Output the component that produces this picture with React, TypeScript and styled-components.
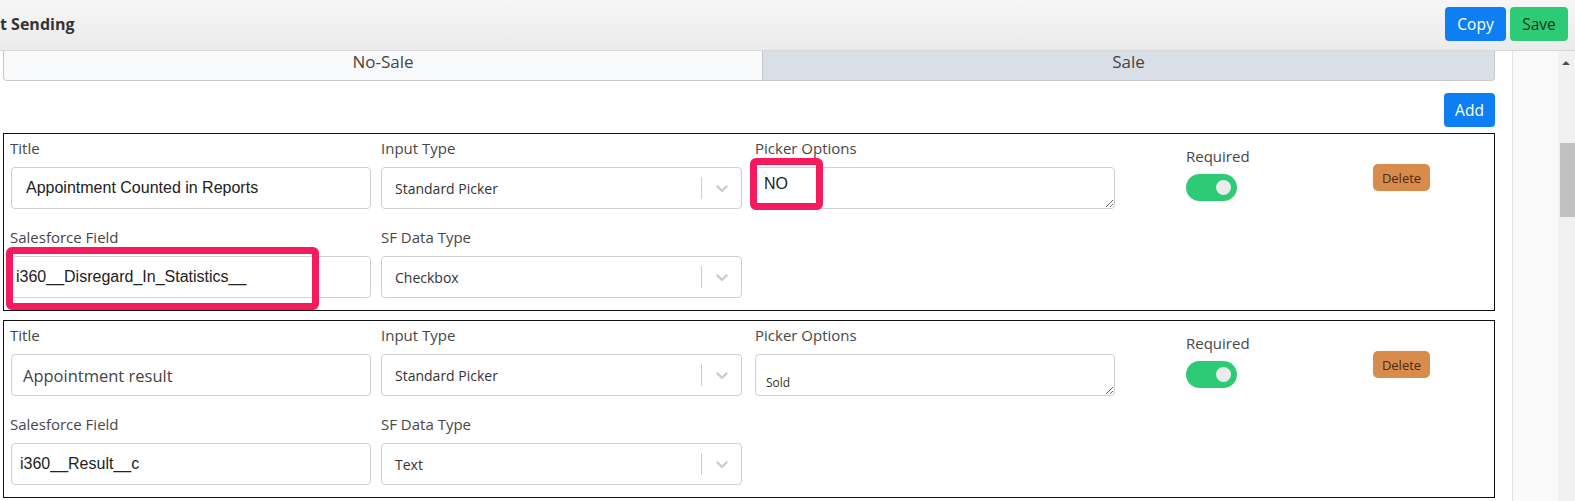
import React from 'react';
import styled, { createGlobalStyle, css } from 'styled-components';

const GlobalStyle = createGlobalStyle`
  html, body {
    margin: 0;
    padding: 0;
    background: #ffffff;
  }
  body {
    font-family: 'Open Sans', 'Liberation Sans', sans-serif;
    color: #333;
  }
  * {
    box-sizing: border-box;
  }
`;

type FieldFont = 'arial' | 'ui';

interface FieldRow {
  title: string;
  titleFont: FieldFont;
  titleInset: number;
  inputType: string;
  picker: string;
  pickerFont: FieldFont;
  sfField: string;
  sfInset: number;
  sfType: string;
}

const rows: FieldRow[] = [
  {
    title: 'Appointment Counted in Reports',
    titleFont: 'arial',
    titleInset: 14,
    inputType: 'Standard Picker',
    picker: 'NO',
    pickerFont: 'arial',
    sfField: 'i360__Disregard_In_Statistics__',
    sfInset: 4,
    sfType: 'Checkbox',
  },
  {
    title: 'Appointment result',
    titleFont: 'ui',
    titleInset: 11,
    inputType: 'Standard Picker',
    picker: '\nSold',
    pickerFont: 'ui',
    sfField: 'i360__Result__c',
    sfInset: 8,
    sfType: 'Text',
  },
];

const Chevron = () => (
  <svg width="20" height="20" viewBox="0 0 20 20" fill="#cccccc">
    <path d="M4.516 7.548c0.436-0.446 1.043-0.481 1.576 0l3.908 3.747 3.908-3.747c0.533-0.481 1.141-0.446 1.574 0 0.436 0.445 0.408 1.197 0 1.615-0.406 0.418-4.695 4.502-4.695 4.502-0.217 0.223-0.502 0.335-0.787 0.335s-0.57-0.112-0.789-0.335c0 0-4.287-4.084-4.695-4.502s-0.436-1.17 0-1.615z" />
  </svg>
);

const FieldCard = ({ row, index }: { row: FieldRow; index: number }) => (
  <Card>
    <Grid>
      <Field>
        <Label>Title</Label>
        <TextInput $font={row.titleFont} $inset={row.titleInset} defaultValue={row.title} />
      </Field>
      <Field>
        <Label>Input Type</Label>
        <Select>
          <SelectValue>{row.inputType}</SelectValue>
          <Separator />
          <Indicator>
            <Chevron />
          </Indicator>
        </Select>
      </Field>
      <Field $shift={3}>
        <Label>Picker Options</Label>
        <TextArea $font={row.pickerFont} defaultValue={row.picker} />
      </Field>
      <Actions>
        <RequiredBlock>
          <Label>Required</Label>
          <Toggle>
            <Knob />
          </Toggle>
        </RequiredBlock>
        <DeleteButton>Delete</DeleteButton>
      </Actions>
      <Field>
        <Label>Salesforce Field</Label>
        <TextInput $font="arial" $inset={row.sfInset} defaultValue={row.sfField} />
      </Field>
      <Field>
        <Label>SF Data Type</Label>
        <Select>
          <SelectValue>{row.sfType}</SelectValue>
          <Separator />
          <Indicator>
            <Chevron />
          </Indicator>
        </Select>
      </Field>
    </Grid>
    {index === 0 && (
      <>
        <Highlight style={{ left: 2, top: 113, width: 313, height: 63 }} />
        <Highlight style={{ left: 746, top: 24, width: 73, height: 52 }} />
      </>
    )}
  </Card>
);

export default function App() {
  return (
    <>
      <GlobalStyle />
      <Page>
        <Header>
          <HeaderTitle>t Sending</HeaderTitle>
          <HeaderActions>
            <HeaderButton $variant="primary">Copy</HeaderButton>
            <HeaderButton $variant="success">Save</HeaderButton>
          </HeaderActions>
        </Header>
        <Body>
          <Main>
            <Tabs>
              <Tab $first>No-Sale</Tab>
              <Tab $active>Sale</Tab>
            </Tabs>
            <AddRow>
              <AddButton>Add</AddButton>
            </AddRow>
            {rows.map((row, i) => (
              <FieldCard key={i} row={row} index={i} />
            ))}
          </Main>
          <Gutter />
          <SidePanel />
          <ScrollTrack>
            <ScrollArrow />
            <ScrollThumb />
          </ScrollTrack>
        </Body>
      </Page>
    </>
  );
}

const Page = styled.div`
  width: 1575px;
  height: 501px;
  display: flex;
  flex-direction: column;
  overflow: hidden;
`;

const Header = styled.header`
  flex: none;
  height: 51px;
  display: flex;
  justify-content: space-between;
  align-items: flex-start;
  padding: 0 7px 0 0;
  background: linear-gradient(#f6f6f6, #ebebeb);
  border-bottom: 1px solid #d9d9d9;
`;

const HeaderTitle = styled.div`
  font-weight: 700;
  font-size: 16px;
  line-height: 20px;
  margin-top: 14px;
  color: #343434;
`;

const HeaderActions = styled.div`
  display: flex;
  gap: 4px;
  margin-top: 7px;
`;

const HeaderButton = styled.button<{ $variant: 'primary' | 'success' }>`
  height: 34px;
  padding: 0 10px;
  border: none;
  border-radius: 4px;
  font-family: 'Open Sans', sans-serif;
  font-size: 15.5px;
  ${({ $variant }) =>
    $variant === 'primary'
      ? css`
          width: 61px;
          background: #0d7ff2;
          color: #ffffff;
        `
      : css`
          width: 58px;
          background: #2dcb76;
          color: #0f3a20;
        `}
`;

const Body = styled.div`
  flex: 1;
  min-height: 0;
  display: flex;
`;

const Main = styled.main`
  width: 1495px;
  flex: none;
  padding-left: 3px;
  overflow: hidden;
`;

const Gutter = styled.div`
  width: 18px;
  flex: none;
  border-right: 1px solid #e2e2e2;
`;

const SidePanel = styled.div`
  width: 45px;
  flex: none;
  background: #f9f9f9;
`;

const ScrollTrack = styled.div`
  width: 17px;
  flex: none;
  background: #f1f1f1;
  display: flex;
  flex-direction: column;
  align-items: flex-end;
`;

const ScrollArrow = styled.div`
  width: 0;
  height: 0;
  margin: 10px 5px 0 0;
  border-left: 4px solid transparent;
  border-right: 4px solid transparent;
  border-bottom: 4px solid #505050;
`;

const ScrollThumb = styled.div`
  width: 15px;
  height: 74px;
  margin-top: 78px;
  background: #c1c1c1;
`;

const Tabs = styled.div`
  display: flex;
  height: 30px;
`;

const Tab = styled.div<{ $active?: boolean; $first?: boolean }>`
  flex: ${({ $first }) => ($first ? '0 0 760px' : '1')};
  text-align: center;
  font-size: 17px;
  line-height: 22px;
  color: #454545;
  border: 1px solid #c8c8c8;
  border-top: none;
  background: ${({ $active }) => ($active ? '#d9dfe6' : '#f8f9fa')};
  border-radius: ${({ $first }) => ($first ? '0 0 0 4px' : '0 0 4px 0')};
  ${({ $first }) => !$first && 'border-left: none;'}
`;

const AddRow = styled.div`
  display: flex;
  justify-content: flex-end;
  margin: 12px 0 6px;
`;

const AddButton = styled.button`
  width: 51px;
  height: 34px;
  border: none;
  border-radius: 4px;
  background: #0d7ff2;
  color: #ffffff;
  font-family: 'Open Sans', sans-serif;
  font-size: 15.5px;
  padding: 0;
`;

const Card = styled.div`
  position: relative;
  border: 1.5px solid #111111;
  padding: 3px 0 12px 6px;
  margin-bottom: 9px;
`;

const Grid = styled.div`
  display: grid;
  grid-template-columns: 371px 371px 371px 1fr;
  row-gap: 17px;
`;

const Field = styled.div<{ $shift?: number }>`
  display: flex;
  flex-direction: column;
  padding-left: ${({ $shift }) => $shift ?? 0}px;
`;

const Label = styled.label`
  font-size: 15px;
  line-height: 22px;
  color: #474747;
  margin-bottom: 8px;
`;

const fontFor = (f: FieldFont) =>
  f === 'arial'
    ? css`
        font-family: 'Liberation Sans', Arial, sans-serif;
        font-size: 16px;
        color: #222;
      `
    : css`
        font-family: 'Open Sans', sans-serif;
        font-size: 16.5px;
        color: #444;
      `;

const TextInput = styled.input<{ $font: FieldFont; $inset: number }>`
  width: 360px;
  height: 42px;
  margin-left: 1px;
  border: 1px solid #cfcfcf;
  border-radius: 4px;
  padding: 0 8px 0 ${({ $inset }) => $inset}px;
  outline: none;
  ${({ $font }) => fontFor($font)}
`;

const Select = styled.div`
  width: 361px;
  height: 42px;
  display: flex;
  align-items: center;
  border: 1px solid #cfcfcf;
  border-radius: 4px;
`;

const SelectValue = styled.div`
  flex: 1;
  padding-left: 13px;
  font-size: 14px;
  color: #333;
`;

const Separator = styled.span`
  width: 1px;
  height: 22px;
  background: #cccccc;
`;

const Indicator = styled.div`
  width: 39px;
  display: flex;
  justify-content: center;
  align-items: center;
`;

const TextArea = styled.textarea<{ $font: FieldFont }>`
  width: 360px;
  height: 42px;
  border: 1px solid #cfcfcf;
  border-radius: 4px;
  outline: none;
  resize: vertical;
  ${({ $font }) =>
    $font === 'arial'
      ? css`
          ${fontFor('arial')}
          padding: 5px 8px;
          line-height: 22px;
        `
      : css`
          font-family: 'Open Sans', sans-serif;
          font-size: 12px;
          color: #333;
          padding: 4px 10px;
          line-height: 16px;
        `}
`;

const Actions = styled.div`
  display: flex;
  align-items: flex-start;
`;

const RequiredBlock = styled.div`
  display: flex;
  flex-direction: column;
  width: 187px;
  margin: 8px 0 0 63px;
  ${Label} {
    margin-bottom: 7px;
  }
`;

const Toggle = styled.div`
  width: 51px;
  height: 27px;
  border-radius: 14px;
  background: #2dcb76;
  display: flex;
  align-items: center;
  justify-content: flex-end;
  padding-right: 6px;
`;

const Knob = styled.span`
  width: 15px;
  height: 15px;
  border-radius: 50%;
  background: #ebebeb;
`;

const DeleteButton = styled.button`
  margin-top: 27px;
  width: 57px;
  height: 27px;
  padding: 0;
  border: none;
  border-radius: 5px;
  background: #d98b4c;
  color: #4a2c14;
  font-family: 'Open Sans', sans-serif;
  font-size: 13px;
`;

const Highlight = styled.div`
  position: absolute;
  border: 7px solid #f7195d;
  border-radius: 6px;
  pointer-events: none;
`;
